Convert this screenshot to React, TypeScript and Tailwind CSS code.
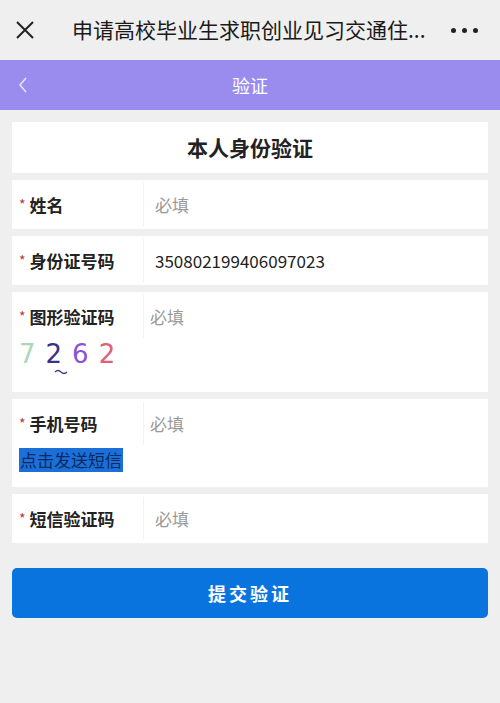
const font = { fontFamily: '"Noto Sans CJK SC", "Noto Sans", sans-serif' };

const Field = ({ label, value, placeholder }: { label: string; value?: string; placeholder?: string }) => (
  <div className="flex h-[49px] bg-white">
    <div className="flex w-[131px] items-center pl-[7px]">
      <span className="mr-[4px] text-[14px] text-[#b53a3a]">*</span>
      <span className="text-[17px] font-bold text-[#222]">{label}</span>
    </div>
    <div className="my-[3px] w-px bg-[#f2f2f2]" />
    <div className="flex flex-1 items-center pl-[11px] text-[17px]">
      {value ? <span className="text-[#222]">{value}</span> : <span className="text-[#999]">{placeholder}</span>}
    </div>
  </div>
);

export default function App() {
  return (
    <div className="min-h-[703px] w-[500px] bg-[#efefef]" style={font}>
      <div className="flex h-[60px] items-center px-[15px]">
        <svg width="20" height="20" viewBox="0 0 20 20" className="shrink-0">
          <path d="M2 2 L18 18 M18 2 L2 18" stroke="#222" strokeWidth="2" />
        </svg>
        <div className="ml-[37px] flex-1 truncate text-[21px] text-[#1a1a1a]">申请高校毕业生求职创业见习交通住...</div>
        <div className="ml-[14px] mr-[7px] flex gap-[6px]">
          <span className="h-[5px] w-[5px] rounded-full bg-[#222]" />
          <span className="h-[5px] w-[5px] rounded-full bg-[#222]" />
          <span className="h-[5px] w-[5px] rounded-full bg-[#222]" />
        </div>
      </div>
      <div className="relative flex h-[50px] items-center justify-center bg-[#9a8cef]">
        <svg width="10" height="16" viewBox="0 0 10 16" className="absolute left-[18px]">
          <path d="M8 1 L2 8 L8 15" stroke="#e8e4ff" strokeWidth="1.5" fill="none" />
        </svg>
        <span className="text-[18px] text-white">验证</span>
      </div>
      <div className="flex flex-col gap-[7px] px-[12px] pt-[12px]">
        <div className="flex h-[51px] items-center justify-center bg-white text-[21px] font-bold text-[#222]">本人身份验证</div>
        <Field label="姓名" placeholder="必填" />
        <Field label="身份证号码" value="350802199406097023" />
        <div className="flex h-[100px] flex-col bg-white">
          <div className="flex h-[49px]">
            <div className="flex w-[131px] items-center pl-[7px]">
              <span className="mr-[4px] text-[14px] text-[#b53a3a]">*</span>
              <span className="text-[17px] font-bold text-[#222]">图形验证码</span>
            </div>
            <div className="my-[3px] w-px bg-[#f2f2f2]" />
            <div className="flex flex-1 items-center pl-[6px] text-[17px] text-[#999]">必填</div>
          </div>
          <div className="relative flex items-center gap-[10px] pl-[7px] text-[26px] leading-none" style={{ fontFamily: '"DejaVu Sans", sans-serif' }}>
            <span className="text-[#a9d9b4]">7</span>
            <span className="text-[#3b2f8f]">2</span>
            <span className="text-[#8b52d9]">6</span>
            <span className="text-[#e0607a]">2</span>
            <svg width="14" height="6" viewBox="0 0 14 6" className="absolute left-[42px] top-[28px]">
              <path d="M1 3 Q4 0 7 3 T13 3" stroke="#3b2f8f" strokeWidth="1.2" fill="none" />
            </svg>
          </div>
        </div>
        <div className="flex h-[88px] flex-col bg-white">
          <div className="flex h-[49px]">
            <div className="flex w-[131px] items-center pl-[7px]">
              <span className="mr-[4px] text-[14px] text-[#b53a3a]">*</span>
              <span className="text-[17px] font-bold text-[#222]">手机号码</span>
            </div>
            <div className="my-[3px] w-px bg-[#f2f2f2]" />
            <div className="flex flex-1 items-center pl-[6px] text-[17px] text-[#999]">必填</div>
          </div>
          <div className="pl-[7px]">
            <span className="inline-block bg-[#1b6fd8] px-[1px] text-[17px] leading-[24px] text-[#0c2a62]">点击发送短信</span>
          </div>
        </div>
        <Field label="短信验证码" placeholder="必填" />
        <button className="mt-[18px] flex h-[50px] items-center justify-center rounded-[5px] bg-[#0a74de] text-[18px] font-bold tracking-[3px] text-white">
          提交验证
        </button>
      </div>
    </div>
  );
}
